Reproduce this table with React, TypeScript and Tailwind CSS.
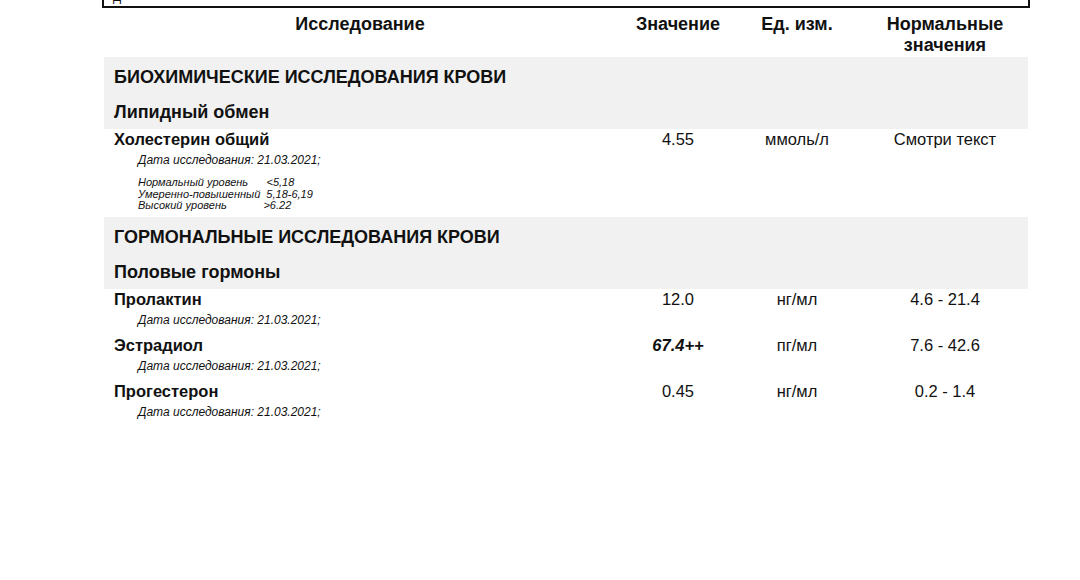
import React from 'react';

const font = { fontFamily: '"Liberation Sans", Arial, sans-serif' };

type Test = { name: string; value: string; unit: string; norm: string; flag?: boolean };

const hormones: Test[] = [
  { name: 'Пролактин', value: '12.0', unit: 'нг/мл', norm: '4.6 - 21.4' },
  { name: 'Эстрадиол', value: '67.4++', unit: 'пг/мл', norm: '7.6 - 42.6', flag: true },
  { name: 'Прогестерон', value: '0.45', unit: 'нг/мл', norm: '0.2 - 1.4' },
];

function Section({ title, group }: { title: string; group: string }) {
  return (
    <div className="bg-[#f1f1f1] pl-[10px] pt-[8px] h-[72px]">
      <div className="text-[18px] font-bold leading-[24px] h-[35px]">{title}</div>
      <div className="text-[18px] font-bold leading-[24px]">{group}</div>
    </div>
  );
}

function Row({ t }: { t: Test }) {
  return (
    <div className="flex h-[46px] pt-[1px]">
      <div className="w-[512px] pl-[10px]">
        <div className="text-[16.5px] font-bold leading-[18px]">{t.name}</div>
        <div className="pl-[24px] text-[12px] italic leading-[16px] mt-[4px]">Дата исследования: 21.03.2021;</div>
      </div>
      <div className={`w-[124px] text-center text-[16.5px] leading-[18px] ${t.flag ? 'font-bold italic' : ''}`}>{t.value}</div>
      <div className="w-[114px] text-center text-[16.5px] leading-[18px]">{t.unit}</div>
      <div className="w-[174px] pl-[8px] text-center text-[16.5px] leading-[18px]">{t.norm}</div>
    </div>
  );
}

export default function App() {
  return (
    <div className="w-[1080px] h-[580px] bg-white text-[#111] pl-[102px] overflow-hidden" style={font}>
      <div className="w-[928px]">
        <div className="h-[8px] border-x-2 border-b-2 border-[#111] overflow-hidden pl-[9px]">
          <div className="text-[12px] leading-[12px] -mt-[9px]">Д</div>
        </div>
        <div className="px-[2px]">
          <div className="flex h-[49px] pt-[6px] text-[18px] font-bold leading-[21px] text-center">
            <div className="w-[512px]">Исследование</div>
            <div className="w-[124px]">Значение</div>
            <div className="w-[114px]">Ед. изм.</div>
            <div className="w-[174px] pl-[8px]">Нормальные<br />значения</div>
          </div>

          <Section title="БИОХИМИЧЕСКИЕ ИССЛЕДОВАНИЯ КРОВИ" group="Липидный обмен" />

          <div className="flex h-[88px] pt-[1px]">
            <div className="w-[512px] pl-[10px]">
              <div className="text-[16.5px] font-bold leading-[18px]">Холестерин общий</div>
              <div className="pl-[24px] text-[12px] italic leading-[16px] mt-[4px]">Дата исследования: 21.03.2021;</div>
              <div className="pl-[24px] text-[11px] italic leading-[11.5px] mt-[9px] whitespace-pre">
                <div>Нормальный уровень      {'<'}5,18</div>
                <div>Умеренно-повышенный  5,18-6,19</div>
                <div>Высокий уровень            {'>'}6.22</div>
              </div>
            </div>
            <div className="w-[124px] text-center text-[16.5px] leading-[18px]">4.55</div>
            <div className="w-[114px] text-center text-[16.5px] leading-[18px]">ммоль/л</div>
            <div className="w-[174px] pl-[8px] text-center text-[16.5px] leading-[18px]">Смотри текст</div>
          </div>

          <Section title="ГОРМОНАЛЬНЫЕ ИССЛЕДОВАНИЯ КРОВИ" group="Половые гормоны" />

          {hormones.map((t) => (
            <Row key={t.name} t={t} />
          ))}
        </div>
      </div>
    </div>
  );
}
